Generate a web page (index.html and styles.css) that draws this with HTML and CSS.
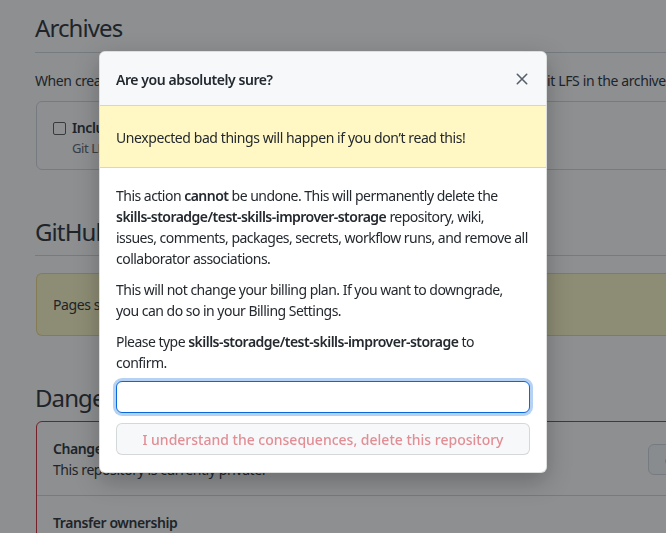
FILE: index.html
```html
<!DOCTYPE html>
<html>
<head>
<meta charset="utf-8">
<link rel="stylesheet" href="styles.css">
</head>
<body>
<div class="page">
  <h2 class="subhead">Archives</h2>
  <p class="lead">When creating source code archives, you can choose to include files stored using Git LFS in the archive.</p>
  <div class="box">
    <label class="check"><span class="checkbox"></span><b>Include Git LFS objects in archives</b></label>
    <p class="note">Git LFS usage in archives is billed at the same rate as usage with the client.</p>
  </div>

  <h2 class="subhead second">GitHub Pages</h2>
  <div class="flash-bg">Pages settings now has its own dedicated tab!</div>

  <h2 class="subhead danger-head">Danger Zone</h2>
  <div class="danger">
    <div class="row">
      <div>
        <b>Change repository visibility</b>
        <div>This repository is currently private.</div>
      </div>
      <span class="btn-danger">Change visibility</span>
    </div>
    <div class="row last">
      <div><b>Transfer ownership</b></div>
    </div>
  </div>
</div>

<div class="overlay">
  <div class="modal">
    <div class="modal-header">
      <span>Are you absolutely sure?</span>
      <svg class="close" width="12" height="12" viewBox="0 0 12 12"><path d="M1.3 1.3 10.7 10.7M10.7 1.3 1.3 10.7" stroke="#57606a" stroke-width="1.6" stroke-linecap="round" fill="none"/></svg>
    </div>
    <div class="modal-flash">Unexpected bad things will happen if you don’t read this!</div>
    <div class="modal-body">
      <p>This action <b>cannot</b> be undone. This will permanently delete the<br><b>skills-storadge/test-skills-improver-storage</b> repository, wiki,<br>issues, comments, packages, secrets, workflow runs, and remove all<br>collaborator associations.</p>
      <p>This will not change your billing plan. If you want to downgrade,<br>you can do so in your Billing Settings.</p>
      <p class="last-p">Please type <b>skills-storadge/test-skills-improver-storage</b> to<br>confirm.</p>
      <input class="confirm-input" type="text" autofocus>
      <button class="btn-confirm" disabled>I understand the consequences, delete this repository</button>
    </div>
  </div>
</div>
</body>
</html>
```

FILE: styles.css
```css
* { box-sizing: border-box; }
html, body { margin: 0; height: 100%; overflow: hidden; }
body {
  font-family: "Noto Sans", "Open Sans", sans-serif;
  font-size: 14px;
  line-height: 21px;
  letter-spacing: -0.42px;
  color: #24292f;
  background: #ffffff;
}
b { font-weight: 600; }

.page { padding: 13px 0 0 35px; width: 800px; }
.subhead {
  font-size: 24px;
  font-weight: 400;
  line-height: 30px;
  letter-spacing: -0.9px;
  margin: 0;
  padding-bottom: 9px;
  border-bottom: 1px solid #d0d7de;
}
.lead { margin: 17px 0 10px; white-space: nowrap; word-spacing: 0.2px; }
.box {
  margin-left: 1px;
  width: 759px;
  border: 1px solid #d0d7de;
  border-radius: 6px;
  padding: 16px 16px 11px;
  line-height: 20px;
}
.check { display: flex; align-items: center; gap: 6px; }
.checkbox {
  width: 13px; height: 13px;
  border: 1px solid #555;
  border-radius: 2px;
  background: #fff;
}
.note { margin: 0 0 0 19px; color: #57606a; font-size: 13px; white-space: nowrap; }
.second { margin-top: 47px; padding-bottom: 8px; }
.flash-bg {
  margin: 17px 0 0 1px;
  width: 759px;
  padding: 20px 16px;
  background: #fff8c5;
  border: 1px solid rgba(212, 167, 44, 0.4);
  border-radius: 6px;
}
.danger-head { margin-top: 47px; border-bottom: 0; padding-bottom: 8px; }
.danger {
  margin-left: 1px;
  width: 759px;
  border: 1px solid #cf222e;
  border-radius: 6px;
}
.row {
  display: flex;
  justify-content: space-between;
  align-items: center;
  padding: 16px 16px 15px;
  border-bottom: 1px solid #d0d7de;
}
.row.last { border-bottom: 0; }
.btn-danger {
  width: 130px;
  height: 31px;
  border: 1px solid #d0d7de;
  border-radius: 6px;
  background: #f6f8fa;
  color: #cf222e;
  font-weight: 600;
  padding: 5px 16px;
  white-space: nowrap;
}

.overlay {
  position: fixed;
  inset: 0;
  background: rgba(27, 31, 35, 0.5);
}
.modal {
  margin: 51px 0 0 99px;
  width: 448px;
  background: #fff;
  border: 1px solid rgba(27, 31, 35, 0.15);
  border-radius: 6px;
  box-shadow: 0 8px 24px rgba(0, 0, 0, 0.25);
}
.modal-header {
  display: flex;
  justify-content: space-between;
  align-items: center;
  height: 53px;
  padding: 1px 18px 0 16px;
  background: #f6f8fa;
  border-radius: 6px 6px 0 0;
  font-weight: 600;
}
.close { display: block; }
.modal-flash {
  padding: 21px 16px 19px;
  background: #fff8c5;
  border-top: 1px solid rgba(212, 167, 44, 0.4);
  border-bottom: 1px solid rgba(212, 167, 44, 0.4);
}
.modal-body { padding: 17px 16px 17px; }
.modal-body p { margin: 0 0 10px; white-space: nowrap; letter-spacing: -0.52px; }
.modal-body .last-p { margin-bottom: 8px; }
.confirm-input {
  display: block;
  width: 100%;
  height: 32px;
  margin: 0;
  border: 1px solid #0969da;
  border-radius: 6px;
  box-shadow: 0 0 0 3px rgba(9, 105, 218, 0.3);
  outline: none;
  font: inherit;
  padding: 5px 12px;
}
.btn-confirm {
  display: block;
  width: 100%;
  height: 32px;
  margin-top: 10px;
  border: 1px solid rgba(27, 31, 35, 0.15);
  border-radius: 6px;
  background: #f6f8fa;
  color: rgba(207, 34, 46, 0.5);
  font: inherit;
  font-weight: 500;
  padding: 0;
}
```
